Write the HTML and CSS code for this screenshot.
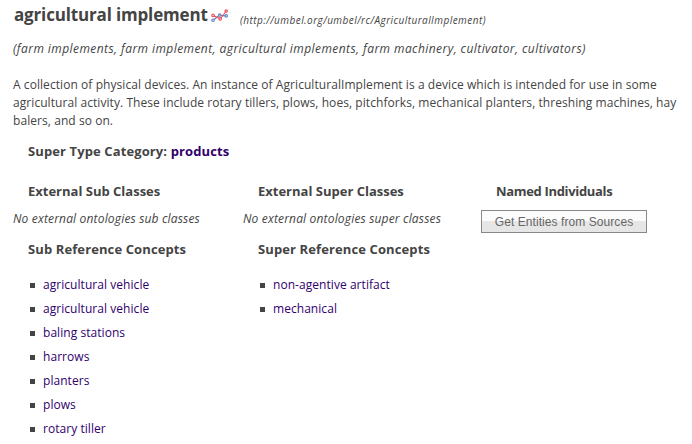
FILE: index.html
```html
<!DOCTYPE html>
<html lang="en">
<head>
  <meta charset="UTF-8" />
  <title>agricultural implement</title>
  <link rel="stylesheet" href="styles.css">
</head>
<body>
  <div class="title">
    <h1>agricultural implement</h1>
    <svg class="graph-icon" width="18" height="14" viewBox="0 0 18 14" fill="none" stroke-width="1.2">
      <path stroke="#5b84c4" d="M3 10.5 L7.6 7 M10 6.5 L14 6.8" />
      <path stroke="#ee4f5c" d="M3 6.9 L8.2 9.2 M10 9 L14.6 3" />
      <circle stroke="#5b84c4" cx="2" cy="11.2" r="1.2" />
      <circle stroke="#5b84c4" cx="8.8" cy="6" r="1.2" />
      <circle stroke="#5b84c4" cx="15.2" cy="6.9" r="1.2" />
      <circle stroke="#ee4f5c" cx="2" cy="6.4" r="1.2" />
      <circle stroke="#ee4f5c" cx="9.2" cy="9.9" r="1.2" />
      <circle stroke="#ee4f5c" cx="15.2" cy="2" r="1.2" />
    </svg>
    <em class="uri">(http://umbel.org/umbel/rc/AgriculturalImplement)</em>
  </div>
  <p class="alt-labels"><em>(farm implements, farm implement, agricultural implements, farm machinery, cultivator, cultivators)</em></p>
  <p class="description">A collection of physical devices. An instance of AgriculturalImplement is a device which is intended for use in some<br>
    agricultural activity. These include rotary tillers, plows, hoes, pitchforks, mechanical planters, threshing machines, hay<br>
    balers, and so on.</p>
  <h2 class="super-type">Super Type Category: <a href="#">products</a></h2>

  <div class="columns">
    <div class="column">
      <h2>External Sub Classes</h2>
      <p class="empty">No external ontologies sub classes</p>
      <h2 class="concepts">Sub Reference Concepts</h2>
      <ul>
        <li><a href="#">agricultural vehicle</a></li>
        <li><a href="#">agricultural vehicle</a></li>
        <li><a href="#">baling stations</a></li>
        <li><a href="#">harrows</a></li>
        <li><a href="#">planters</a></li>
        <li><a href="#">plows</a></li>
        <li><a href="#">rotary tiller</a></li>
      </ul>
    </div>
    <div class="column">
      <h2>External Super Classes</h2>
      <p class="empty">No external ontologies super classes</p>
      <h2 class="concepts">Super Reference Concepts</h2>
      <ul>
        <li><a href="#">non-agentive artifact</a></li>
        <li><a href="#">mechanical</a></li>
      </ul>
    </div>
    <div class="column individuals">
      <h2>Named Individuals</h2>
      <button type="button">Get Entities from Sources</button>
    </div>
  </div>
</body>
</html>
```

FILE: styles.css
```css
body {
  margin: 0;
  padding: 5px 0 0 13px;
  height: 444px;
  box-sizing: border-box;
  overflow: hidden;
  background: #fff;
  color: #444;
  font-family: "Trebuchet MS", "Open Sans", sans-serif;
  font-size: 12px;
  line-height: 18px;
}
h1, h2, p, ul {
  margin: 0;
  padding: 0;
}
a {
  color: #30006e;
  text-decoration: none;
}
.title {
  display: flex;
  height: 24px;
}
h1 {
  width: 198px;
  padding-left: 1px;
  box-sizing: border-box;
  font-size: 17px;
  line-height: 20px;
  letter-spacing: -0.16px;
  white-space: nowrap;
}
.graph-icon {
  margin-top: 4px;
}
.uri {
  margin: 6px 0 0 11px;
  font-size: 10px;
  letter-spacing: 0.45px;
  white-space: nowrap;
}
.alt-labels {
  margin-top: 11px;
  letter-spacing: 0.43px;
  white-space: nowrap;
}
.description {
  margin-top: 18px;
  letter-spacing: 0.065px;
  white-space: nowrap;
}
h2 {
  padding-left: 15px;
  font-size: 13px;
  line-height: 20px;
  white-space: nowrap;
}
.super-type,
.concepts {
  letter-spacing: 0.11px;
}
.super-type {
  margin-top: 11px;
}
.columns {
  display: flex;
  margin-top: 20px;
}
.column {
  flex: 0 0 230px;
}
.individuals {
  flex-basis: 200px;
  padding-left: 8px;
}
.individuals h2 {
  margin-bottom: 9px;
  letter-spacing: -0.33px;
}
.empty {
  margin: 9px 0 11px;
  font-style: italic;
  letter-spacing: 0.17px;
  white-space: nowrap;
}
ul {
  margin-top: 14px;
  list-style: none;
}
li {
  display: flex;
  align-items: center;
  height: 24px;
  padding-left: 17px;
  letter-spacing: 0.05px;
  white-space: nowrap;
}
li::before {
  content: "";
  width: 5px;
  height: 5px;
  margin: 1px 8px 0 0;
  background: #444;
}
button {
  display: block;
  width: 166px;
  height: 23px;
  padding: 0;
  border: 1px solid #888;
  background: linear-gradient(#fcfcfc 48%, #e6e6e6 48%);
  color: #666;
  font-family: "Liberation Sans", Arial, sans-serif;
  font-size: 12px;
  letter-spacing: 0.07px;
}
```
